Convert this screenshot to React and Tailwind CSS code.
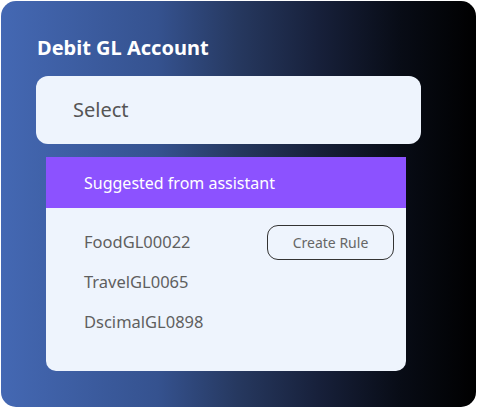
export default function App() {
  const items = ["FoodGL00022", "TravelGL0065", "DscimalGL0898"]

  return (
    <div className="w-[478px] h-[409px] bg-white p-px font-['Noto_Sans',sans-serif]">
      <div className="h-[406px] w-[475px] rounded-[15px] bg-[linear-gradient(to_right,#4468b3_0%,#35528f_33%,#26385f_50%,#17203a_67%,#080c16_84%,#000_100%)] pt-[33px] pl-[35px] pr-[56px]">
        {/* Title */}
        <h1 className="ml-px text-[20px] leading-[27px] font-bold text-white">
          Debit GL Account
        </h1>

        {/* Select box */}
        <div className="mt-[15px] h-[68px] w-[385px] rounded-[12px] bg-[#eef4fd] flex items-center pl-[37px]">
          <span className="text-[20px] text-[#555]">Select</span>
        </div>

        {/* Dropdown */}
        <div className="mt-[13px] ml-[10px] w-[360px] rounded-b-[10px] bg-[#eef4fd] overflow-hidden">
          <div className="h-[51px] bg-[#8c52ff] flex items-center pl-[38px]">
            <span className="text-[16px] text-white">Suggested from assistant</span>
          </div>
          <div className="pt-[14px] pb-[29px] pl-[38px] pr-[12px] flex flex-col">
            {items.map((item, i) => (
              <div key={item} className="h-[40px] flex items-center justify-between">
                <span className="text-[16.5px] text-[#5f5f5f]">{item}</span>
                {i === 0 && (
                  <button className="h-[35px] w-[127px] rounded-[11px] border-[1.5px] border-[#333] text-[14px] text-[#666]">
                    Create Rule
                  </button>
                )}
              </div>
            ))}
          </div>
        </div>
      </div>
    </div>
  )
}
